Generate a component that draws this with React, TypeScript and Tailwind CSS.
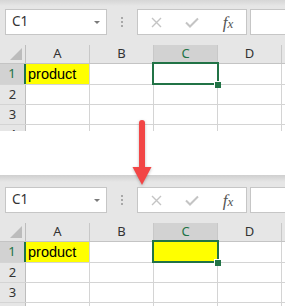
import React from "react";

const UI = { fontFamily: '"Noto Sans", "Open Sans", sans-serif' };
const CELL = { fontFamily: '"Liberation Sans", Arial, sans-serif' };

function Toolbar({ tall }: { tall: boolean }) {
  return (
    <div
      className={
        tall
          ? "flex h-[48px] items-start bg-[linear-gradient(to_bottom,#cfcfcf_0px,#e6e6e6_7px)] pt-[12px]"
          : "flex h-[45px] items-start bg-[linear-gradient(to_bottom,#d6d6d6_0px,#e6e6e6_6px)] pt-[9px]"
      }
    >
      <div className="ml-[5px] flex h-[26px] w-[102px] items-center justify-between border border-[#c6c6c6] bg-white pl-[6px] pr-[6px]">
        <span className="text-[13.5px] leading-none text-[#333]" style={UI}>
          C1
        </span>
        <span className="h-0 w-0 border-x-[3px] border-t-[3px] border-x-transparent border-t-[#7a7a7a]" />
      </div>
      <div className="ml-[14px] mt-[8px] flex flex-col gap-[2px]">
        <span className="h-[2px] w-[2px] bg-[#a8a8a8]" />
        <span className="h-[2px] w-[2px] bg-[#a8a8a8]" />
        <span className="h-[2px] w-[2px] bg-[#a8a8a8]" />
      </div>
      <div className="ml-[14px] flex h-[26px] w-[110px] items-center border border-[#c6c6c6] bg-white">
        <div className="flex flex-1 items-center justify-center">
          <svg width="11" height="11" viewBox="0 0 11 11">
            <path d="M1 1 L10 10 M10 1 L1 10" stroke="#c4c4c4" strokeWidth="1.4" fill="none" />
          </svg>
        </div>
        <div className="flex flex-1 items-center justify-center">
          <svg width="14" height="11" viewBox="0 0 14 11">
            <path d="M1 5.5 L5 9.5 L13 1.5" stroke="#c4c4c4" strokeWidth="2" fill="none" />
          </svg>
        </div>
        <div className="flex flex-1 items-center justify-center">
          <span
            className="text-[17px] italic leading-none text-[#555]"
            style={{ fontFamily: '"Liberation Serif", "DejaVu Serif", serif' }}
          >
            f<span className="text-[13px]">x</span>
          </span>
        </div>
      </div>
      <div className="ml-[3px] h-[26px] flex-1 border border-r-0 border-[#c6c6c6] bg-white" />
    </div>
  );
}

const COLS = ["A", "B", "C", "D"];

function HeaderRow() {
  return (
    <div className="flex h-[19px] border-b border-[#c4c4c4] bg-[#e6e6e6]" style={UI}>
      <div className="relative w-[26px] border-r border-[#bdbdbd]">
        <svg className="absolute left-[10px] top-[3px]" width="13" height="13" viewBox="0 0 13 13">
          <polygon points="12,0 12,12 0,12" fill="#bcbcbc" />
        </svg>
      </div>
      {COLS.map((c) => (
        <div
          key={c}
          className={
            c === "C"
              ? "flex w-[64px] items-center justify-center border-r border-[#c8c8c8] bg-[#d2d2d2] text-[13px] text-[#217346]"
              : "flex w-[64px] items-center justify-center border-r border-[#c8c8c8] text-[13px] text-[#333]"
          }
        >
          {c}
        </div>
      ))}
      <div className="flex-1" />
    </div>
  );
}

function Row({ n, filled }: { n: number; filled: boolean }) {
  const first = n === 1;
  return (
    <div className={first ? "flex h-[21px] border-b border-[#d4d4d4]" : "flex h-[20px] border-b border-[#d4d4d4]"}>
      <div
        className={
          first
            ? "flex w-[26px] items-center justify-center border-r-2 border-[#217346] bg-[#d2d2d2] text-[13px] text-[#217346]"
            : "flex w-[26px] items-center justify-center border-r border-[#bdbdbd] bg-[#e6e6e6] text-[13px] text-[#333]"
        }
        style={UI}
      >
        {n}
      </div>
      <div
        className={
          first
            ? "flex w-[64px] items-end border-r border-[#d4d4d4] bg-[#ffff00] pb-[1px] pl-[2px] text-[14.5px] leading-[18px] text-black"
            : "w-[64px] border-r border-[#d4d4d4] bg-white"
        }
        style={CELL}
      >
        {first ? "product" : null}
      </div>
      <div className="w-[64px] border-r border-[#d4d4d4] bg-white" />
      <div className={first && filled ? "relative w-[64px] border-r border-[#d4d4d4] bg-[#ffff00]" : "relative w-[64px] border-r border-[#d4d4d4] bg-white"}>
        {first ? (
          <>
            <div className="absolute left-[-2px] top-[-2px] z-[1] h-[23px] w-[67px] border-2 border-[#217346]" />
            <div className="absolute left-[60px] top-[17px] z-[2] h-[7px] w-[7px] border-l border-t border-white bg-[#217346]" />
          </>
        ) : null}
      </div>
      <div className="w-[64px] border-r border-[#d4d4d4] bg-white" />
      <div className="flex-1 bg-white" />
    </div>
  );
}

function Sheet({ second }: { second: boolean }) {
  return (
    <div className="h-[131px] overflow-hidden bg-white">
      <Toolbar tall={second} />
      <HeaderRow />
      <Row n={1} filled={second} />
      <Row n={2} filled={second} />
      <Row n={3} filled={second} />
      <Row n={4} filled={second} />
    </div>
  );
}

export default function App() {
  return (
    <div className="relative h-[306px] w-[285px] overflow-hidden bg-white">
      <Sheet second={false} />
      <div className="h-[44px] bg-white" />
      <Sheet second={true} />
      <svg
        className="absolute left-[131px] top-[117px] z-10"
        width="23"
        height="72"
        viewBox="0 0 23 72"
        style={{ filter: "drop-shadow(0px 1px 1.5px rgba(0,0,0,0.25))" }}
      >
        <path d="M8 6 A3 3 0 0 1 14 6 L14 51 L8 51 Z" fill="#f24646" />
        <polygon points="1.5,50 20.5,50 11,68" fill="#f24646" />
      </svg>
    </div>
  );
}
